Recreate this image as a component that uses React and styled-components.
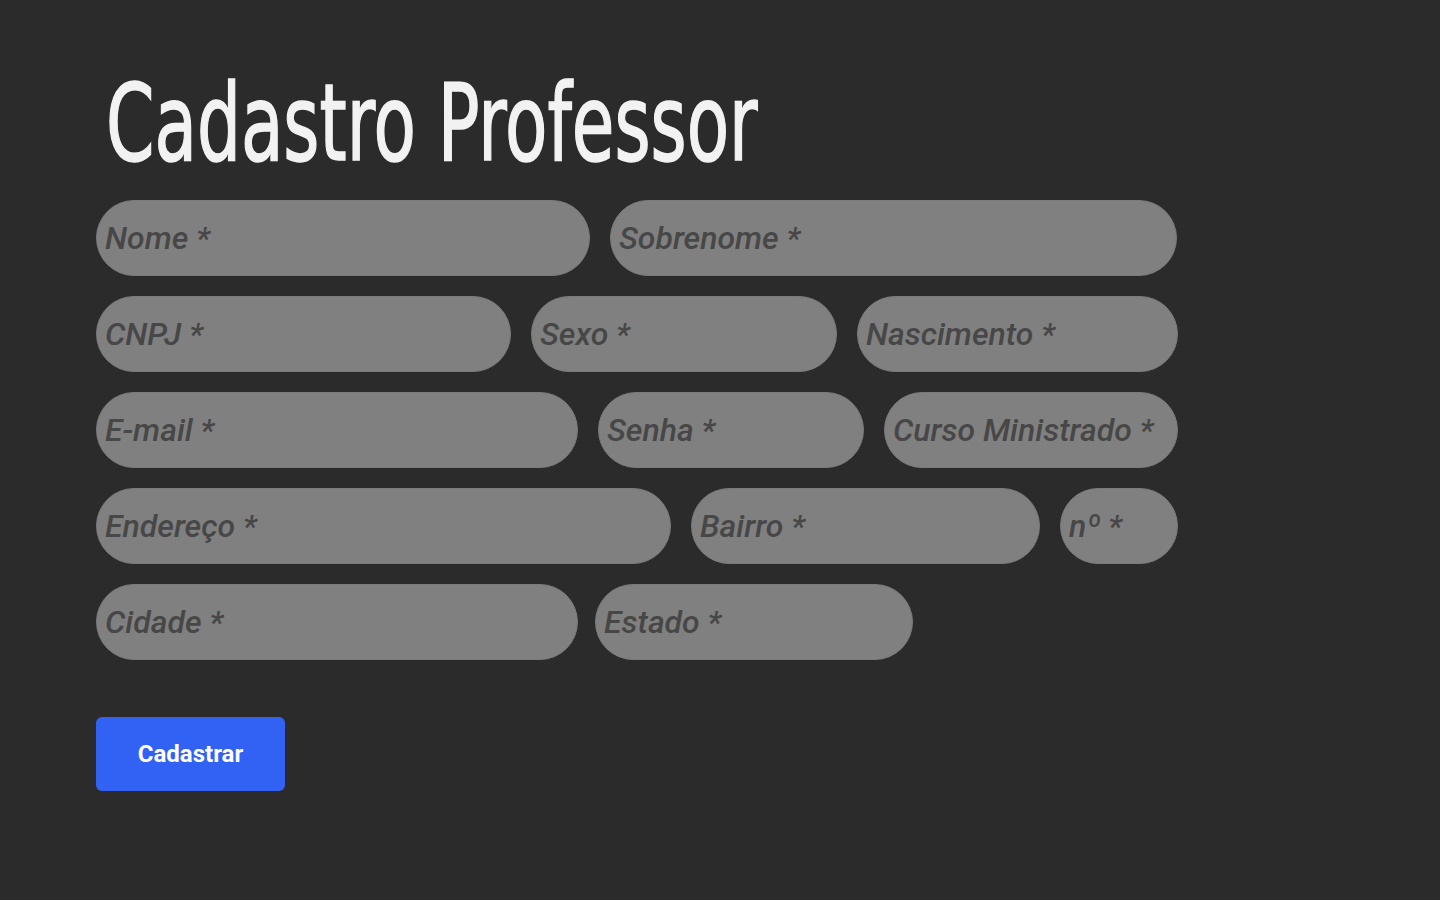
import styled, { createGlobalStyle } from 'styled-components';

const GlobalStyle = createGlobalStyle`
  html, body {
    margin: 0;
    padding: 0;
    background: #2b2b2b;
    font-family: Roboto, 'Liberation Sans', sans-serif;
  }
`;

const rows = [
  {
    gap: 20,
    fields: [
      { label: 'Nome *', width: 494 },
      { label: 'Sobrenome *', width: 567 },
    ],
  },
  {
    gap: 20,
    fields: [
      { label: 'CNPJ *', width: 415 },
      { label: 'Sexo *', width: 306 },
      { label: 'Nascimento *', width: 321 },
    ],
  },
  {
    gap: 20,
    fields: [
      { label: 'E-mail *', width: 482, type: 'email' },
      { label: 'Senha *', width: 266, type: 'password' },
      { label: 'Curso Ministrado *', width: 294 },
    ],
  },
  {
    gap: 20,
    fields: [
      { label: 'Endereço *', width: 575 },
      { label: 'Bairro *', width: 349 },
      { label: 'nº *', width: 118 },
    ],
  },
  {
    gap: 17,
    fields: [
      { label: 'Cidade *', width: 482 },
      { label: 'Estado *', width: 318 },
    ],
  },
];

const Page = styled.main`
  min-height: 900px;
  box-sizing: border-box;
  padding: 70px 96px 0;
  background: #2b2b2b;
`;

const Title = styled.h1`
  margin: 0 0 23px 10px;
  font-family: 'DejaVu Sans Condensed', 'Liberation Sans Narrow', sans-serif;
  font-weight: 400;
  font-size: 107px;
  line-height: 1;
  color: #f2f2f2;
  -webkit-text-stroke: 1.5px #f2f2f2;
  transform: scaleX(0.72);
  transform-origin: left center;
  white-space: nowrap;
`;

const Form = styled.form`
  display: flex;
  flex-direction: column;
  gap: 20px;
`;

const Row = styled.div`
  display: flex;
  gap: ${(p) => p.$gap}px;
`;

const Field = styled.input`
  box-sizing: border-box;
  width: ${(p) => p.$width}px;
  height: 76px;
  padding: 0 8px;
  border: 1px solid #7a7a7a;
  border-radius: 38px;
  background: #808080;
  font-family: Roboto, 'Liberation Sans', sans-serif;
  font-size: 32px;
  font-weight: 500;
  font-style: italic;
  color: #3f3f3f;
  outline: none;

  &::placeholder {
    color: #474747;
    opacity: 1;
  }
`;

const Button = styled.button`
  align-self: flex-start;
  margin-top: 37px;
  width: 189px;
  height: 74px;
  border: none;
  border-radius: 6px;
  background: #3162f4;
  color: #ffffff;
  font-family: Roboto, 'Liberation Sans', sans-serif;
  font-weight: 700;
  font-size: 24px;
  cursor: pointer;
`;

export default function App() {
  return (
    <>
      <GlobalStyle />
      <Page>
        <Title>Cadastro Professor</Title>
        <Form onSubmit={(e) => e.preventDefault()}>
          {rows.map((row, i) => (
            <Row key={i} $gap={row.gap}>
              {row.fields.map((f) => (
                <Field key={f.label} $width={f.width} type={f.type || 'text'} placeholder={f.label} />
              ))}
            </Row>
          ))}
          <Button type="submit">Cadastrar</Button>
        </Form>
      </Page>
    </>
  );
}
